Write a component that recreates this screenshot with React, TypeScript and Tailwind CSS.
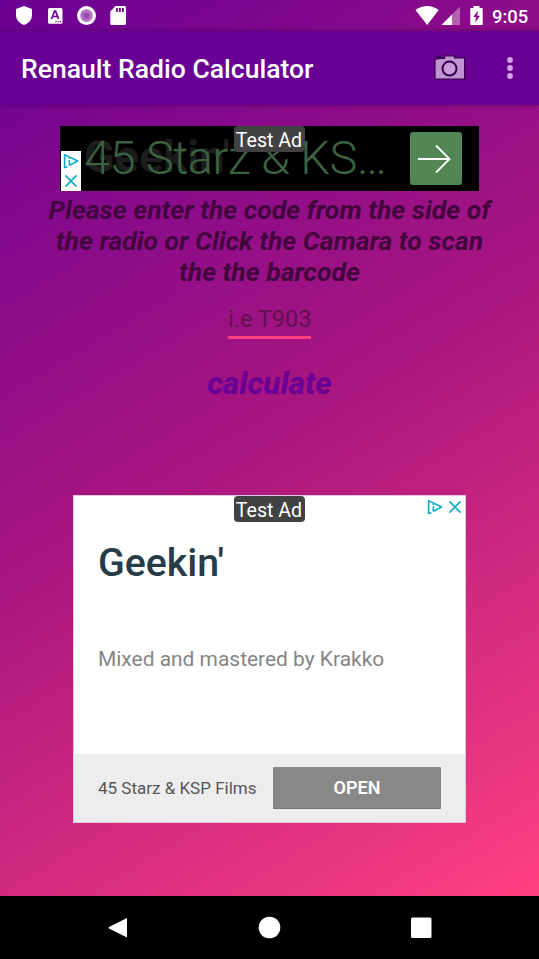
import React from "react";

function AdChoices() {
  return (
    <svg className="h-4 w-4 shrink-0" viewBox="0 0 16 16" fill="none" stroke="#14a9c9" strokeWidth="1.6">
      <path d="M4.400 13.700L1.600 14.600V1.600L14.600 8L6.600 12.300" strokeLinejoin="round" />
      <path d="M6.300 7v5.500M6.300 4.600v1.400" strokeWidth="1.500" />
    </svg>
  );
}

function CloseMark() {
  return (
    <svg className="h-4 w-4 shrink-0" viewBox="0 0 16 16" fill="none" stroke="#14a9c9" strokeWidth="1.6">
      <path d="M2.4 2.4L13.6 13.6M13.6 2.4L2.4 13.6" />
    </svg>
  );
}

function StatusBar() {
  return (
    <div className="flex h-[31px] items-center justify-between pr-[10px] pl-4">
      <svg width="116" height="31" viewBox="16 0 116 31">
        <path d="M24 6l8 3v6c0 5-3.500 8.500-8 10c-4.500-1.500-8-5-8-10V9z" fill="#fff" />
        <rect x="48" y="8" width="14.500" height="15.700" rx="1.500" fill="#fff" />
        <path d="M51.500 19L54.600 11.200h1L58.600 19M52.800 16.500h4.600" fill="none" stroke="#6d0595" strokeWidth="1.700" />
        <path d="M55.300 21.600h6" stroke="#6d0595" strokeWidth="1.200" strokeDasharray="1.300 1" />
        <circle cx="86.500" cy="15.600" r="9.500" fill="#fff" />
        <circle cx="86.500" cy="15.600" r="6.300" fill="#b56fc3" />
        <circle cx="86.500" cy="15.600" r="2.900" fill="#984bad" />
        <path d="M115.500 6H124.500a1.500 1.500 0 0 1 1.500 1.500V23.500a1.500 1.500 0 0 1-1.500 1.500H111.800a1.500 1.500 0 0 1-1.500-1.500V11.500z" fill="#fff" />
        <path d="M116 8h1.800v4H116zM119 8h1.800v4H119zM122 8h1.800v4H122z" fill="#7b078e" />
      </svg>
      <div className="flex items-center">
        <svg width="72" height="31" viewBox="414 0 72 31">
          <path d="M415.500 10Q427 2 438.700 10L427.200 25z" fill="#fff" />
          <path d="M460 6.500V25H441.500z" fill="#b760b2" />
          <path d="M452 14.500V25H441.500z" fill="#fff" />
          <path d="M473.500 6h6v2h2.200a1 1 0 0 1 1 1V24a1 1 0 0 1-1 1H471.300a1 1 0 0 1-1-1V9a1 1 0 0 1 1-1h2.200z" fill="#fff" />
          <path d="M478 10.500L473.300 17h2.700l-.8 5.500L480 15.800h-2.800z" fill="#880a8b" />
        </svg>
        <span className="ml-[6px] w-[37px] pt-[2px] text-[18.400px] leading-[30px] font-medium whitespace-nowrap">9:05</span>
      </div>
    </div>
  );
}

function Toolbar() {
  return (
    <header className="flex h-[74px] items-center bg-[#6a0093] pl-[21px] shadow-[0_0_4px_rgba(40,0,50,0.55)]">
      <h1 className="flex-1 pt-[1px] text-[26.550px] leading-8 font-medium whitespace-nowrap">Renault Radio Calculator</h1>
      <svg width="32" height="26" viewBox="434 55 32 26" className="mr-10">
        <path d="M435 59.500L440 58.300H444.500V56H454.500V57.800H464.600V79H435z" fill="#c193d3" stroke="#35004a" strokeWidth="1.200" />
        <path d="M436 56.700H440.500V58" stroke="#35004a" strokeWidth="1.400" fill="none" />
        <circle cx="449.500" cy="68.600" r="7" fill="#c79cd7" stroke="#35004a" strokeWidth="2" />
      </svg>
      <svg width="8" height="24" viewBox="0 0 8 24" fill="#d0a8df" className="mr-[25px]">
        <circle cx="4" cy="4" r="2.900" />
        <circle cx="4" cy="12" r="2.900" />
        <circle cx="4" cy="20" r="2.900" />
      </svg>
    </header>
  );
}

function TestLabel() {
  return (
    <span className="absolute top-0 left-1/2 -ml-[36px] h-[26px] w-[71px] rounded-[4px] bg-[#424242] text-center text-[19.600px] leading-[29px] whitespace-nowrap text-white">
      Test Ad
    </span>
  );
}

function BannerAd() {
  return (
    <section className="relative mx-auto mt-[21px] flex h-[65px] w-[419px] items-center bg-black">
      <span className="absolute top-[5px] left-6 text-[45px] leading-[52px] font-bold text-[#1c1c1c]">Geekin'</span>
      <div className="absolute bottom-0 left-[1px] flex h-10 w-5 flex-col items-center justify-around bg-white">
        <AdChoices />
        <CloseMark />
      </div>
      <span className="relative -top-[1px] ml-6 flex-1 text-[47px] leading-[65px] font-light tracking-[-0.55px] whitespace-nowrap text-[#3b6140]">45 Starz &amp; KS…</span>
      <div className="mr-[17px] flex h-[53px] w-[52px] items-center justify-center rounded-[3px] bg-[#528655]">
        <svg width="34" height="30" viewBox="0 0 34 30" fill="none" stroke="#fff" strokeWidth="1.800" className="-ml-1">
          <path d="M1 15H32M19 1.500L32.500 15L19 28.500" />
        </svg>
      </div>
      <TestLabel />
    </section>
  );
}

function CardAd() {
  return (
    <section className="relative mx-auto mt-[93px] flex h-[328px] w-[393px] flex-col border border-[#e0c8da] bg-white">
      <div className="absolute top-[3px] right-[2px] flex gap-1">
        <AdChoices />
        <CloseMark />
      </div>
      <TestLabel />
      <div className="flex-1 pl-6">
        <h2 className="mt-[42px] text-[39.300px] leading-[50px] font-medium text-[#263c48]">Geekin'</h2>
        <p className="mt-[58px] text-[20.950px] leading-[26px] text-[#858585]">Mixed and mastered by Krakko</p>
      </div>
      <div className="flex h-[68px] items-center justify-between bg-[#ededed] pr-6 pl-6">
        <span className="text-[17px] leading-5 text-[#555]">45 Starz &amp; KSP Films</span>
        <button className="h-[42px] w-[168px] rounded-[1px] border-b border-[#757575] bg-[#888] text-[18px] font-semibold text-white">OPEN</button>
      </div>
    </section>
  );
}

export default function App() {
  return (
    <div className="flex h-[959px] w-[539px] flex-col overflow-hidden bg-black font-['Roboto',sans-serif] text-white">
      <div className="h-[896px] bg-[linear-gradient(149deg,#6a0094_0%,#ab177f_50%,#ff4081_100%)]">
        <StatusBar />
        <Toolbar />
        <main>
          <BannerAd />
          <p className="mt-[3px] text-center text-[26.550px] leading-[31px] font-bold text-[#42053d] italic">
            Please enter the code from the side of
            <br />
            the radio or Click the Camara to scan
            <br />
            the the barcode
          </p>
          <div className="mx-auto mt-[17px] h-[35px] w-[83px] border-b-[3px] border-[#ff4081] pt-[1px] text-center text-[23.500px] leading-[28px] whitespace-nowrap text-[#62104f]">
            i.e T903
          </div>
          <div className="mt-[27px] text-center text-[31.400px] leading-[36px] font-extrabold text-[#6a0094] italic">calculate</div>
          <CardAd />
        </main>
      </div>
      <nav className="h-[63px]">
        <svg width="539" height="63" viewBox="0 0 539 63" fill="#fff">
          <path d="M127 22V41.500L109 32.500Q108 31.700 109 31z" />
          <circle cx="269.500" cy="31.500" r="10.800" />
          <rect x="411" y="21.500" width="20.500" height="20.500" rx="1.500" />
        </svg>
      </nav>
    </div>
  );
}
